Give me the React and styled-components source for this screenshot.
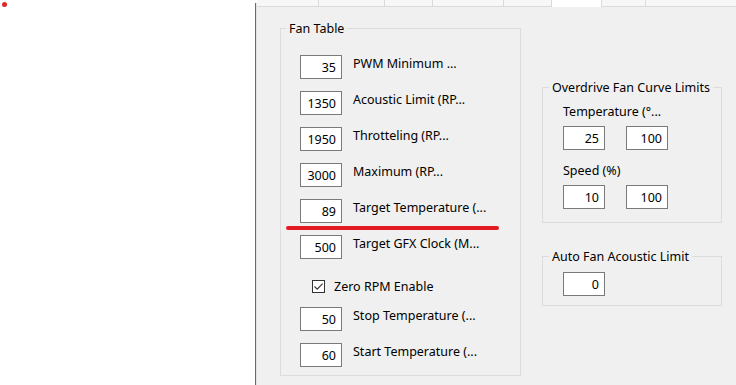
import React from "react";
import styled, { createGlobalStyle } from "styled-components";

const Global = createGlobalStyle`
  html, body { margin: 0; padding: 0; background: #ffffff; }
  body { font-family: "Noto Sans", "Liberation Sans", Arial, sans-serif; font-size: 12.5px; color: #000; }
`;

const Page = styled.div`
  display: flex;
  width: 736px;
  height: 385px;
  overflow: hidden;
  position: relative;
`;

const LeftArea = styled.div`
  width: 255px;
  flex: none;
  background: #ffffff;
  position: relative;
`;

const Dot = styled.span`
  position: absolute;
  left: 2px;
  top: 2px;
  width: 5px;
  height: 5px;
  border-radius: 50%;
  background: #e0252b;
`;

const Divider = styled.div`
  width: 1px;
  flex: none;
  margin-top: 3px;
  background: #6a6a6a;
  border-right: 1px solid #e2e2e2;
`;

const Right = styled.div`
  flex: 1;
  display: flex;
  flex-direction: column;
  min-width: 0;
`;

const TabStrip = styled.div`
  display: flex;
  height: 7px;
  flex: none;
`;

const Tab = styled.div`
  width: ${(p) => p.$w}px;
  flex: ${(p) => (p.$fill ? "1" : "none")};
  box-sizing: border-box;
  background: ${(p) => (p.$active ? "#ffffff" : "#f7f7f7")};
  border-right: ${(p) => (p.$fill ? "none" : "1px solid #dadada")};
  border-bottom: ${(p) => (p.$active ? "none" : "1px solid #dadada")};
`;

const Panel = styled.div`
  flex: 1;
  background: #f0f0f0;
  display: flex;
  align-items: flex-start;
  gap: 21px;
  padding: 21px 0 0 23px;
`;

const Group = styled.div`
  position: relative;
  box-sizing: border-box;
  border: 1px solid #dcdcdc;
  width: ${(p) => p.$w}px;
  height: ${(p) => p.$h}px;
  padding: ${(p) => p.$pad};
  display: flex;
  flex-direction: column;
`;

const Legend = styled.span`
  position: absolute;
  top: -9px;
  left: ${(p) => p.$left}px;
  padding: 0 3px;
  line-height: 17px;
  background: #f0f0f0;
  white-space: nowrap;
`;

const Column = styled.div`
  display: flex;
  flex-direction: column;
  margin-top: ${(p) => p.$top || 0}px;
  gap: ${(p) => p.$gap || 0}px;
`;

const FieldList = styled.div`
  display: flex;
  flex-direction: column;
  gap: 12px;
`;

const Row = styled.div`
  display: flex;
  align-items: flex-start;
  gap: 11px;
`;

const NumBox = styled.div`
  width: 42px;
  height: 24px;
  box-sizing: border-box;
  border: 1px solid #7a7a7a;
  background: #ffffff;
  display: flex;
  align-items: center;
  justify-content: flex-end;
  padding-right: 5px;
  flex: none;
`;

const Label = styled.div`
  line-height: 17px;
  white-space: nowrap;
`;

const CheckRow = styled.div`
  display: flex;
  align-items: center;
  gap: 9px;
  height: 13px;
  margin: 9px 0 2px 12px;
`;

const CheckBox = styled.span`
  width: 13px;
  height: 13px;
  box-sizing: border-box;
  border: 1px solid #333333;
  background: #ffffff;
  display: flex;
  align-items: center;
  justify-content: center;
`;

const SubLabel = styled.div`
  line-height: 17px;
  white-space: nowrap;
  margin-bottom: 6px;
`;

const BoxPair = styled.div`
  display: flex;
  gap: 21px;
  margin-bottom: ${(p) => p.$mb || 0}px;
`;

const RedMark = styled.span`
  position: absolute;
  left: 5px;
  top: 197px;
  width: 213px;
  height: 4px;
  border-radius: 2px;
  background: #e31b23;
`;

const fanRows = [
  ["35", "PWM Minimum ..."],
  ["1350", "Acoustic Limit (RP..."],
  ["1950", "Throtteling (RP..."],
  ["3000", "Maximum (RP..."],
  ["89", "Target Temperature (..."],
  ["500", "Target GFX Clock (M..."],
];

const tempRows = [
  ["50", "Stop Temperature (..."],
  ["60", "Start Temperature (..."],
];

const tabs = [
  { w: 62 },
  { w: 66 },
  { w: 48 },
  { w: 71 },
  { w: 48 },
  { w: 50, active: true },
  { w: 44 },
  { fill: true },
];

export default function App() {
  return (
    <Page>
      <Global />
      <LeftArea>
        <Dot />
      </LeftArea>
      <Divider />
      <Right>
        <TabStrip>
          {tabs.map((t, i) => (
            <Tab key={i} $w={t.w || 0} $active={t.active} $fill={t.fill} />
          ))}
        </TabStrip>
        <Panel>
          <Group $w={241} $h={348} $pad="26px 0 0 19px">
            <Legend $left={5}>Fan Table</Legend>
            <FieldList>
              {fanRows.map(([v, l]) => (
                <Row key={l}>
                  <NumBox>{v}</NumBox>
                  <Label>{l}</Label>
                </Row>
              ))}
              <CheckRow>
                <CheckBox>
                  <svg width="11" height="11" viewBox="0 0 11 11">
                    <path d="M1.5 5.5 L4.2 8.2 L9.6 2.6" fill="none" stroke="#333" strokeWidth="1.1" />
                  </svg>
                </CheckBox>
                <span>Zero RPM Enable</span>
              </CheckRow>
              {tempRows.map(([v, l]) => (
                <Row key={l}>
                  <NumBox>{v}</NumBox>
                  <Label>{l}</Label>
                </Row>
              ))}
            </FieldList>
            <RedMark />
          </Group>
          <Column $top={59} $gap={33}>
            <Group $w={180} $h={136} $pad="15px 0 0 20px">
              <Legend $left={6}>Overdrive Fan Curve Limits</Legend>
              <SubLabel>Temperature (°...</SubLabel>
              <BoxPair $mb={12}>
                <NumBox>25</NumBox>
                <NumBox>100</NumBox>
              </BoxPair>
              <SubLabel>Speed (%)</SubLabel>
              <BoxPair>
                <NumBox>10</NumBox>
                <NumBox>100</NumBox>
              </BoxPair>
            </Group>
            <Group $w={180} $h={50} $pad="15px 0 0 20px">
              <Legend $left={6}>Auto Fan Acoustic Limit</Legend>
              <BoxPair>
                <NumBox>0</NumBox>
              </BoxPair>
            </Group>
          </Column>
        </Panel>
      </Right>
    </Page>
  );
}
